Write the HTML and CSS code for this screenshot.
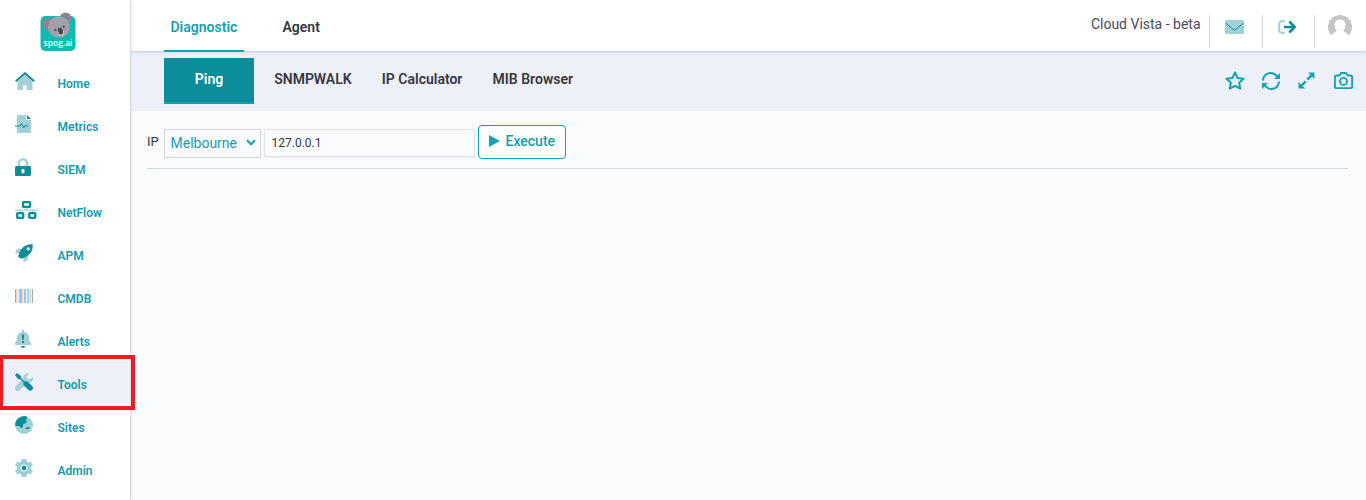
FILE: index.html
```html
<!DOCTYPE html>
<html lang="en">
<head>
<meta charset="utf-8">
<title>Diagnostic</title>
<link rel="stylesheet" href="styles.css">
</head>
<body>
<div class="app">
  <aside class="sidebar">
    <div class="logo">
      <svg width="38" height="42" viewBox="0 0 38 42">
        <rect x="1.500" y="5" width="35" height="35" rx="5" fill="#0fbab1"/>
        <circle cx="9" cy="13" r="6" fill="#858691"/><circle cx="26.500" cy="7.500" r="6" fill="#858691"/>
        <ellipse cx="20" cy="16" rx="11" ry="10.500" fill="#a0a1aa"/>
        <ellipse cx="22.300" cy="22" rx="3" ry="3" fill="#c3c0c8"/>
        <ellipse cx="21.500" cy="20" rx="2.300" ry="3.600" transform="rotate(-18 21.500 20)" fill="#454452"/>
        <circle cx="16.500" cy="19" r="1.100" fill="#454452"/><circle cx="24.700" cy="15.700" r="1.100" fill="#454452"/>
        <text class="logo-text" x="4.500" y="34.500" textLength="29" lengthAdjust="spacingAndGlyphs">spog.ai</text>
      </svg>
    </div>
    <nav class="menu">
      <a class="item"><span class="ico"><svg width="20" height="18" viewBox="0 0 20 18"><path class="light" d="M10 3 2.500 9.500V18H8v-5h4v5h5.500V9.500z"/><path d="m.8 9.300 9.200-8 9.200 8" fill="none" stroke="#0d8c99" stroke-width="2"/></svg></span>Home</a>
      <a class="item"><span class="ico"><svg width="16" height="18" viewBox="0 0 16 18"><path class="light" d="M2 1q0-1 1-1h8v5h5v12q0 1-1 1H3q-1 0-1-1z"/><path class="dark" d="M12 0v4h4z"/><path d="M0 11h5l1.500-2.500 2.300 4.500 1.700-3 1 1H13" fill="none" stroke="#0d8c99"/></svg></span>Metrics</a>
      <a class="item"><span class="ico"><svg width="16" height="18" viewBox="0 0 16 18"><path d="M4 9V5.300a4 4 0 0 1 8 0V9" fill="none" stroke="#9fd1d6" stroke-width="2.500"/><rect class="dark" y="8" width="16" height="10" rx="1.500"/><rect x="6.500" y="11" width="3" height="4.300" rx="1" fill="#fff"/></svg></span>SIEM</a>
      <a class="item"><span class="ico"><svg width="23" height="18" viewBox="0 0 23 18"><path class="light" d="M0 8.500h22.500v1.300H0zM10.500 6h1.500v3h-1.500zM4.500 9H6v3H4.500zM16.500 9H18v3h-1.500z"/><g fill="#fff" stroke="#0d8c99" stroke-width="2.300"><rect x="8" y="1.200" width="7" height="4.600" rx=".5"/><rect x="2.200" y="12.200" width="6" height="4.600" rx=".5"/><rect x="14.300" y="12.200" width="6" height="4.600" rx=".5"/></g></svg></span>NetFlow</a>
      <a class="item"><span class="ico"><svg width="18" height="18" viewBox="0 0 18 18"><path class="light" d="M7 5H3Q2 5 1.500 6L0 9.500h5zM13 11v4q0 1-1 1.500L8.500 18v-5z"/><path class="dark" d="M4 10Q7 0 17.500 0q1.500 9-8.500 14-3.500 1-5-.5T4 10z"/><circle cx="13.300" cy="4.900" r="1.600" fill="#fff"/></svg></span>APM</a>
      <a class="item"><span class="ico"><svg width="18" height="14" viewBox="0 0 18 14"><path fill="#e2f2f8" d="M0 0h18v14H0z"/><path fill="#8fb7b9" d="M0 0h1v14H0zM17 0h1v14h-1z"/><path fill="#f3cfae" d="M1 0h1v14H1zM7 0h1v14H7zM12 0h1v14h-1zM15 0h1v14h-1z"/><path fill="#8dccf0" d="M4 0h2v14H4zM9 0h1v14H9zM13 0h1v14h-1z"/><path fill="#b9b8ea" d="M6 0h1v14H6zM10 0h1v14h-1z"/></svg></span>CMDB</a>
      <a class="item"><span class="ico"><svg width="16" height="18" viewBox="0 0 16 18"><path class="light" d="M7 0h2v2q5 1 5 6 0 3 1.700 4.500Q16.500 15 15 15H1q-1.500 0-.7-2.500Q2 11 2 8q0-5 5-6z"/><path class="dark" d="M6.800 4.500h2.400L8.700 10H7.300zM7 11h2v2H7zM5.800 16h4.400q-.3 2-2.200 2t-2.200-2z"/></svg></span>Alerts</a>
      <a class="item active"><span class="ico"><svg width="18" height="18" viewBox="0 0 18 18"><path class="light" d="M17.700 4 15 6.500 12 6l-.5-3L14 .3Q10.800-.4 9 2 8 3.500 8.500 5.500L.7 13.300q-1.400 2 0 3.900 1.900 1.500 3.900.1L12.500 9.500q4.800 1 5.500-3.500z"/><path class="dark" d="M0 2 2 0l4 3v2l3.500 3.500q2-.8 3.500.6l4.300 4.200q1.500 2 0 3.500t-3.500.5L9.300 13q-1.400-1.500-.7-3.500L5 6H3z"/></svg></span>Tools</a>
      <a class="item"><span class="ico"><svg width="18" height="18" viewBox="0 0 18 18"><circle class="light" cx="9" cy="9" r="9"/><path class="dark" d="M9 0h2l1 2-.5 1.500L10 4l2 1-1 2-3 1.500L8 11l-2 1-2-2H1L0 8.500Q1 1 9 0zM10 13l2-2h2l1 1.500-2 .5z"/></svg></span>Sites</a>
      <a class="item"><span class="ico"><svg width="18" height="18" viewBox="-9 -9 18 18"><g class="light"><circle r="7"/><rect x="-2.500" y="-9" width="5" height="18" rx="1"/><rect x="-2.500" y="-9" width="5" height="18" rx="1" transform="rotate(60)"/><rect x="-2.500" y="-9" width="5" height="18" rx="1" transform="rotate(120)"/></g><circle r="3.500" fill="#e0f1f3"/><circle class="dark" r="2.200"/></svg></span>Admin</a>
    </nav>
    <div class="highlight"></div>
  </aside>
  <main class="main">
    <header class="topbar">
      <nav class="tabs"><a class="tab current">Diagnostic</a><a class="tab">Agent</a></nav>
      <div class="account">
        <span class="tenant">Cloud Vista - beta</span>
        <span class="cell"><svg width="19" height="14" viewBox="0 0 19 14"><rect class="light" width="19" height="14" rx="1.500"/><path d="m.5 3 7.500 6.300q1.500 1 3 0L18.500 3" fill="none" stroke="#0d8c99"/></svg></span>
        <span class="cell"><svg width="18" height="14" viewBox="0 0 18 14"><path d="M7 1.200H4Q1.200 1.200 1.200 4v6q0 2.800 2.800 2.800h3" fill="none" stroke="#9fd1d6" stroke-width="2"/><path d="M6 7h10.500M11.300 1.500 16.800 7l-5.500 5.500" fill="none" stroke="#0d8c99" stroke-width="2.500"/></svg></span>
        <span class="cell"><svg width="24" height="24" viewBox="0 0 24 24"><circle cx="12" cy="12" r="12" fill="#c5c5c5"/><path fill="#fff" d="M12 4.500q5.500 0 5.500 5.500 0 3-2 5 0 1.500 2 2.500 2 .8 3 2.500V24h-17v-4q1-1.700 3-2.500 2-1 2-2.500-2-2-2-5 0-5.500 5.500-5.500z"/></svg></span>
      </div>
    </header>
    <section class="toolbar">
      <nav class="subtabs"><a class="subtab selected">Ping</a><a class="subtab">SNMPWALK</a><a class="subtab">IP Calculator</a><a class="subtab">MIB Browser</a></nav>
      <div class="actions">
        <svg width="20" height="19" viewBox="0 0 20 19"><path d="m10 1.500 2.500 5.400 6 .8-4.300 4.100 1 5.900L10 14.900l-5.200 2.800 1-5.900L1.500 7.700l6-.8z" stroke-width="2"/></svg>
        <svg width="18" height="18" viewBox="0 0 18 18"><path d="M1 8.500Q1.500 1.500 8.500 1q4 0 7 4M17 9.500Q16.500 16.500 9.500 17q-4 0-7-4" stroke-width="2"/><path class="solid" d="M18 1v6h-6zM0 17v-6h6z"/></svg>
        <svg width="17" height="17" viewBox="0 0 17 17"><path d="m9.300 7.700 5-5M7.700 9.300l-5 5" stroke-width="2.400"/><path class="solid" d="M10 .5h6.500V7zM.5 10v6.500H7z"/></svg>
        <svg width="19" height="17" viewBox="0 0 19 17"><path d="M2.500 3.500h3L7 1h5l1.500 2.500h3q1.600 0 1.600 1.500v9.600q0 1.500-1.600 1.500h-14Q.9 16.100.9 14.600V5q0-1.500 1.600-1.500z" stroke-width="1.900"/><circle cx="9.500" cy="9.400" r="3.500" stroke-width="1.900"/></svg>
      </div>
    </section>
    <form class="query">
      <label class="ip">IP</label>
      <div class="select">Melbourne<svg width="10" height="7" viewBox="0 0 10 7"><path d="m1 1.300 4 4 4-4" fill="none" stroke="#13a2b1" stroke-width="2"/></svg></div>
      <input class="address" type="text" value="127.0.0.1">
      <button class="execute" type="button"><svg width="11" height="12" viewBox="0 0 11 12"><path d="M0 0v12l11-6z" fill="#13a2b1"/></svg>Execute</button>
    </form>
  </main>
</div>
</body>
</html>
```
FILE: styles.css
```css
* { box-sizing: border-box; }
body { margin: 0; font-family: Roboto, sans-serif; background: #fafbfd; color: #36363f; }
svg { display: block; flex: none; }
.app { display: flex; height: 500px; overflow: hidden; }
.sidebar { position: relative; z-index: 2; width: 130px; flex: none; background: #fff; box-shadow: 1px 0 2px #c9d1e5; }
.logo { height: 60px; padding: 11px 0 0 39px; }
.logo-text { font: 600 8.500px "Open Sans", sans-serif; fill: #fff; }
.item { display: flex; align-items: center; height: 43px; padding: 4px 0 0 15px; color: #159bab; font-size: 12px; font-weight: 600; line-height: 18px; }
.item.active { background: #edf0f8; }
.ico { width: 42.500px; margin-top: -5px; }
.light { fill: #9fd1d6; }
.dark { fill: #0d8c99; }
.highlight { position: absolute; left: 0; top: 355px; width: 135px; height: 55px; border: 4px solid #ed1c24; border-left-width: 3px; }
.main { flex: 1; min-width: 0; }
.topbar { position: relative; display: flex; justify-content: space-between; height: 52px; background: #fff; border-bottom: 1px solid #ccd3e2; box-shadow: 0 1px 3px #d6dce8; }
.tabs { display: flex; padding-left: 34px; gap: 32px; }
.tab { height: 52px; padding: 17px 6px 0 6.500px; font-size: 14px; font-weight: 600; line-height: 20px; }
.tab.current { width: 80px; color: #13a2b1; border-bottom: 2px solid #13a2b1; }
.account { display: flex; padding-top: 15px; }
.tenant { padding-right: 8.500px; font-size: 14px; line-height: 19px; color: #4a4a57; }
.cell { display: flex; justify-content: center; width: 53px; height: 33px; padding-top: 5px; border-left: 1px solid #cfd6e6; }
.cell:nth-of-type(2) { padding-right: 3px; }
.cell:nth-of-type(3) { width: 52px; padding-right: 4px; }
.cell:last-child { width: 52px; padding: 0 1.500px 0 0; }
.toolbar { display: flex; justify-content: space-between; height: 59px; background: #edf0f8; padding: 6px 13px 0 34px; }
.subtabs { display: flex; }
.subtab { height: 46px; margin-left: 30.200px; font-size: 14px; font-weight: 600; line-height: 42px; }
.subtab.selected { width: 90px; margin: 0 -10px 0 0; text-align: center; color: #fff; background: #0d8c99; border-bottom: 2px solid #13a2b1; }
.actions { display: flex; align-items: center; gap: 18px; height: 45px; }
.actions svg:first-child { margin-right: -1px; }
.actions svg:last-child { margin-left: 1px; }
.actions path, .actions circle { fill: none; stroke: #13a2b1; stroke-linejoin: round; }
.actions .solid { fill: #13a2b1; stroke: none; }
.query { display: flex; height: 58px; margin: 0 18px 0 17px; padding-top: 14px; border-bottom: 1px solid #d0d7e7; }
.ip { width: 17px; padding-top: 8px; font-size: 13px; line-height: 18px; }
.select { display: flex; align-items: center; justify-content: space-between; width: 97px; height: 29px; margin-top: 4px; padding: 0 4px 2px 5.500px; border: 1px solid #cfd6e8; color: #159eae; font-size: 14px; }
.address { width: 211px; height: 28px; margin: 4px 0 0 3px; padding: 0 6.500px; border: 1px solid #e1e3ef; box-shadow: 0 1px 1px #eceef5; background: #fafbfd; font: 12px Roboto, sans-serif; color: #36363f; }
.execute { display: flex; align-items: center; width: 88px; height: 34px; margin-left: 3px; padding: 0 0 2px 10px; gap: 5.500px; border: 1px solid #13a2b1; border-radius: 4px; background: #fff; color: #159eae; font: 500 14px Roboto, sans-serif; }
```
